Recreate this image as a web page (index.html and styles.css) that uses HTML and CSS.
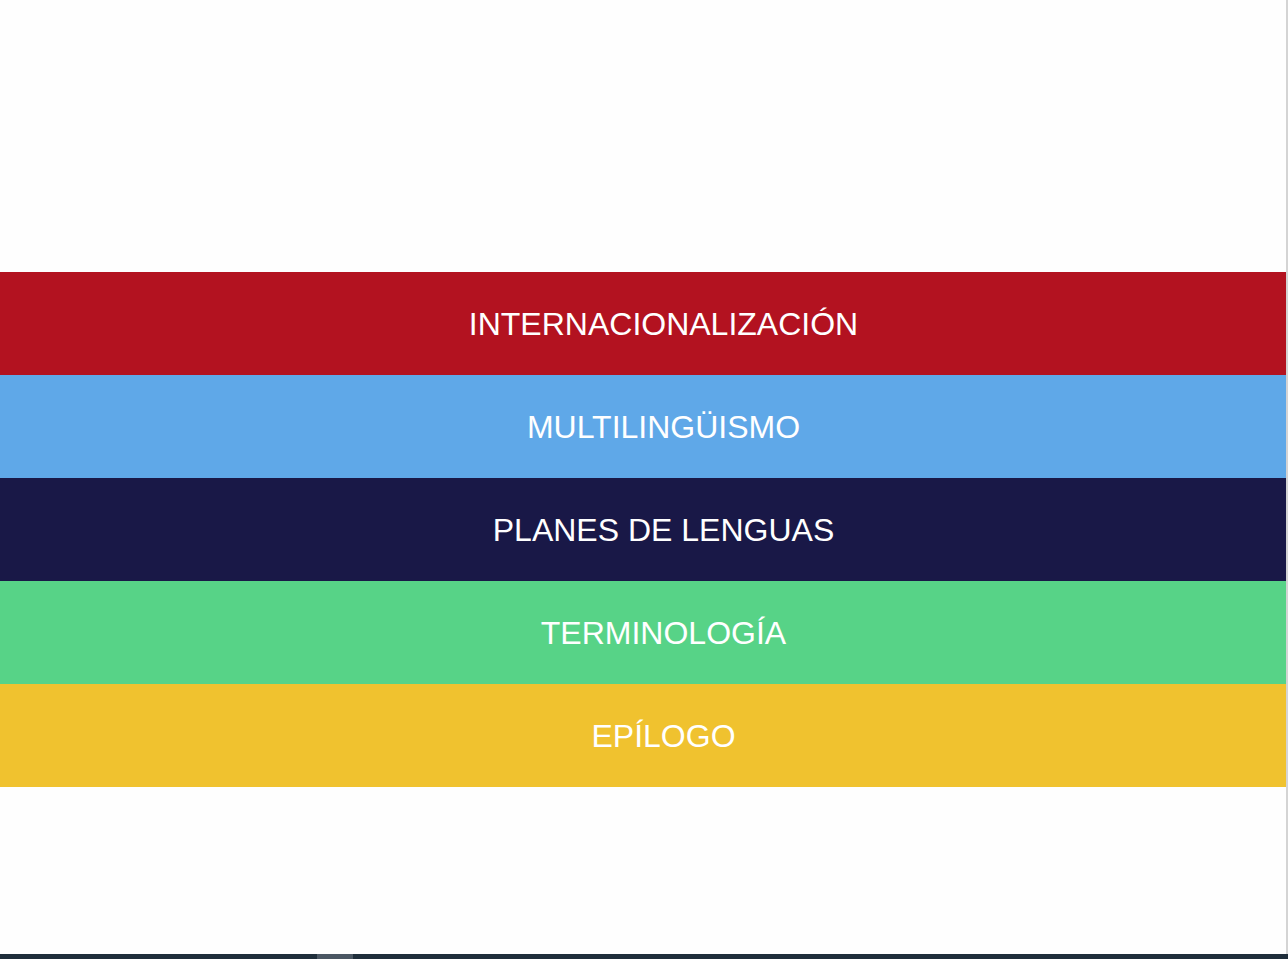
FILE: index.html
```html
<!DOCTYPE html>
<html lang="es">
<head>
  <meta charset="UTF-8" />
  <meta name="viewport" content="width=device-width, initial-scale=1.0" />
  <title>Capítulos</title>
  <link rel="stylesheet" href="styles.css">
</head>
<body>
  <div class="page">
    <nav class="chapters">
      <a class="chapter red" href="#">INTERNACIONALIZACIÓN</a>
      <a class="chapter blue" href="#">MULTILINGÜISMO</a>
      <a class="chapter navy" href="#">PLANES DE LENGUAS</a>
      <a class="chapter green" href="#">TERMINOLOGÍA</a>
      <a class="chapter yellow" href="#">EPÍLOGO</a>
    </nav>
  </div>
  <div class="progress-bar">
    <div class="progress-thumb"></div>
  </div>
</body>
</html>
```

FILE: styles.css
```css
* {
  margin: 0;
  padding: 0;
  box-sizing: border-box;
}
html, body {
  height: 100%;
}
body {
  display: flex;
  flex-direction: column;
  background: #fefefe;
  font-family: 'Liberation Sans', Arial, sans-serif;
  overflow: hidden;
}
.page {
  flex: 1;
  padding-top: 272px;
  border-right: 2px solid #d4d4d4;
}
.chapters {
  display: flex;
  flex-direction: column;
}
.chapter {
  display: flex;
  align-items: center;
  justify-content: center;
  height: 103px;
  color: #fff;
  font-size: 32px;
  text-decoration: none;
  padding-left: 41px;
  padding-top: 1px;
}
.red { background: #b31220; }
.blue { background: #5fa8e8; }
.navy { background: #191847; }
.green { background: #57d387; }
.yellow { background: #f0c22f; }
.progress-bar {
  height: 5px;
  background: #1f2e3b;
  padding-left: 317px;
}
.progress-thumb {
  width: 36px;
  height: 100%;
  background: #4b5763;
}
```
